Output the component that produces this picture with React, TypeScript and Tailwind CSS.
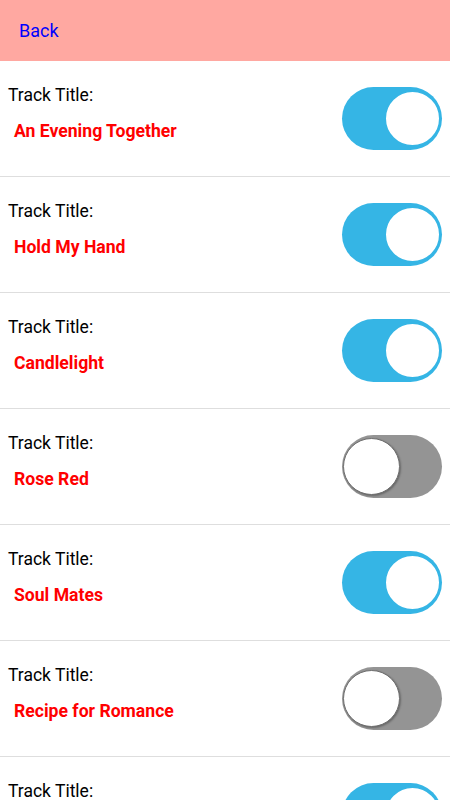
const tracks = [
  { title: "An Evening Together", on: true },
  { title: "Hold My Hand", on: true },
  { title: "Candlelight", on: true },
  { title: "Rose Red", on: false },
  { title: "Soul Mates", on: true },
  { title: "Recipe for Romance", on: false },
  { title: "Forever Yours", on: true },
];

function Toggle({ on }: { on: boolean }) {
  return on ? (
    <div className="flex h-[63px] w-[100px] items-center justify-end rounded-full bg-[#35b5e5] pr-[1px]">
      <div className="h-[57px] w-[57px] rounded-full border-2 border-[#35b5e5] bg-white" />
    </div>
  ) : (
    <div className="flex h-[63px] w-[100px] items-center justify-start rounded-full bg-[#949494] pl-[1px]">
      <div className="h-[57px] w-[57px] rounded-full border border-[#6e6e6e] bg-white shadow-[1px_1px_2px_rgba(0,0,0,0.3)]" />
    </div>
  );
}

export default function App() {
  return (
    <div className="h-[800px] w-[450px] overflow-hidden bg-white font-['Roboto',sans-serif]">
      <div className="flex h-[61px] items-center bg-[#ffa8a1] pl-[19px]">
        <span className="text-[18px] text-[#0000ff]">Back</span>
      </div>
      {tracks.map((t) => (
        <div key={t.title} className="flex h-[116px] items-center justify-between border-b border-[#dedede] pl-2 pr-2">
          <div className="flex h-full flex-col pt-[23px]">
            <div className="text-[17.5px] leading-[22px] text-black">Track Title:</div>
            <div className="mt-[14px] pl-[6px] text-[17.6px] font-bold leading-[22px] text-[#ff0000]">{t.title}</div>
          </div>
          <Toggle on={t.on} />
        </div>
      ))}
    </div>
  );
}
